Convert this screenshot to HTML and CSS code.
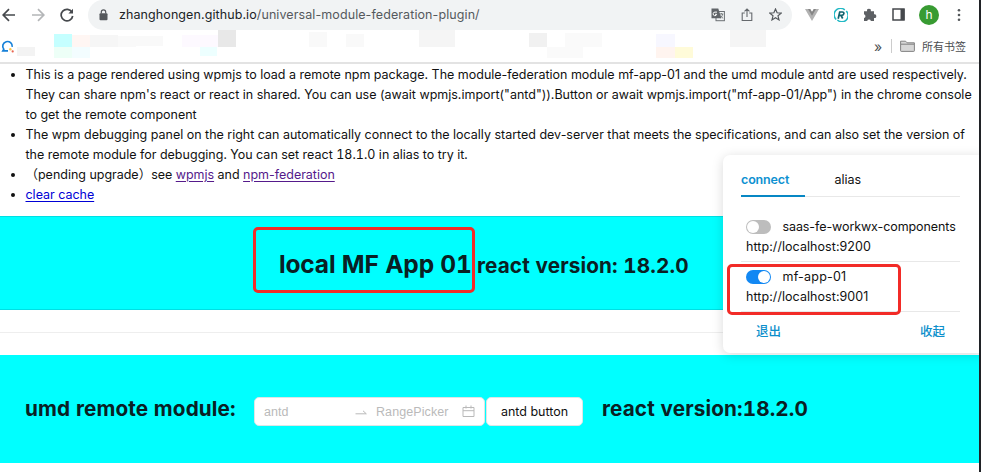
FILE: index.html
```html
<!DOCTYPE html>
<html lang="en">
<head>
<meta charset="utf-8">
<title>universal-module-federation-plugin</title>
<link rel="stylesheet" href="styles.css">
</head>
<body>
<div class="window">
  <header class="toolbar">
    <nav class="nav">
      <svg width="14" height="14" viewBox="0 0 14 14" class="ic dark"><path d="M13 7H1.5M7 1.2 1.2 7 7 12.8"/></svg>
      <svg width="14" height="14" viewBox="0 0 14 14" class="ic light"><path d="M1 7h11.5M7 1.2 12.8 7 7 12.8"/></svg>
      <svg width="14" height="14" viewBox="0 0 14 14" class="ic dark"><path d="M12 4.2A5.8 5.8 0 1 0 12.7 8"/><path d="M13 .8V5.4H8.4z" class="fill"/></svg>
    </nav>
    <div class="address">
      <svg class="lock" width="9" height="12" viewBox="0 0 9 12"><rect x=".5" y="4.2" width="8" height="7" rx="1" fill="#55585c"/><path d="M2.3 4.5V3a2.2 2.2 0 0 1 4.4 0v1.5" fill="none" stroke="#55585c" stroke-width="1.2"/></svg>
      <span class="url"><b>zhanghongen.github.io</b>/universal-module-federation-plugin/</span>
      <svg class="translate" width="14" height="14" viewBox="0 0 14 14"><rect x="5" y="3.5" width="8.4" height="9.2" fill="#f1f3f4" stroke="#6c7074"/><path d="M.5.5h6.8l3 9.8H.5z" fill="#606468"/><path d="M6 4.1H4a1.8 1.8 0 1 0 1.7 2.2H4" fill="none" stroke="#fff"/><path d="M8.3 6h4M10.3 5v1M11.7 6c-.4 2-1.3 3.3-2.6 4M9.3 7.5c.6 1.2 1.6 2.1 2.8 2.7" fill="none" stroke="#606468" stroke-width=".8"/></svg>
      <svg class="share" width="12" height="14" viewBox="0 0 12 14"><path d="M3.8 5H1.2v7.5h9.6V5H8.2M6 9V1M3.5 3.4 6 1l2.5 2.4" fill="none" stroke="#65696d" stroke-width="1.1"/></svg>
      <svg width="13" height="13" viewBox="0 0 13 13"><path d="m6.5 1 1.6 3.8 4.1.3L9 7.8l1 4.1-3.5-2.2L3 11.9l1-4.1L.8 5.1l4.1-.3z" fill="none" stroke="#55595d" stroke-width="1.2"/></svg>
    </div>
    <div class="extensions">
      <svg width="14" height="12" viewBox="0 0 14 12"><path d="M0 0h5.2L7 3 8.8 0H14L7 12z" fill="#b2b2b2"/><path d="M3 0h2.2L7 3 8.8 0H11L7 6.8z" fill="#858585"/></svg>
      <svg width="14" height="14" viewBox="0 0 14 14"><path d="M2.2 11.5A6 6 0 0 1 10.8 2M12.2 3A6 6 0 0 1 3.4 12" fill="none" stroke="#22b9c5" stroke-width="1.5"/><path d="M4.2 10.7 5.7 4h2.7c2.2 0 2 3.4-.8 3.4H5.2M7.1 7.5l1.6 3" fill="none" stroke="#12636e" stroke-width="1.7"/></svg>
      <svg width="14" height="14" viewBox="0 0 14 14"><path d="M1 3.2h3.1a1.9 1.9 0 1 1 3.7 0H11v3.1a1.9 1.9 0 1 1 0 3.7v3H7.9a1.9 1.9 0 0 0-3.7 0H1v-3a1.9 1.9 0 0 0 0-3.7z" fill="#5d6064"/></svg>
      <svg width="13" height="13" viewBox="0 0 13 13"><rect x="1" y="1" width="11" height="11" fill="#fff" stroke="#45484c" stroke-width="1.5"/><path d="M8.5 1h4v11h-4z" fill="#45484c"/></svg>
      <span class="avatar">h</span>
      <svg width="4" height="14" viewBox="0 0 4 14" fill="#55585c"><circle cx="2" cy="2.3" r="1.3"/><circle cx="2" cy="7" r="1.3"/><circle cx="2" cy="11.7" r="1.3"/></svg>
    </div>
  </header>

  <div class="bookmarks">
    <svg class="favicon" width="15" height="15" viewBox="0 0 15 15"><path d="M7.5 12.2H2l1-1.7A5.1 5.1 0 1 1 12 8" fill="none" stroke="#1680d8" stroke-width="1.8"/><circle cx="10" cy="10.5" r="1.3" fill="#fbc54b"/><circle cx="12.5" cy="12.8" r="1.2" fill="#e86450"/></svg>
    <svg class="mosaic" width="753" height="32" viewBox="17 30 753 32" shape-rendering="crispEdges">
      <path d="M17 47h18v9H17z" fill="#f3f3f3"/><path d="M54 34h18v13H54z" fill="#c5ffff"/><path d="M54 47h18v11H54z" fill="#edfff7"/><path d="M72 35h18v12H72z" fill="#fff6f3"/><path d="M72 47h18v11H72z" fill="#f3fdff"/>
      <path d="M90 35h28v12H90z" fill="#f6f6f6"/><path d="M118 36h18v11h-18zM136 36h27v10h-27z" fill="#f9f9f9"/><path d="M182 35h36v12h-36z" fill="#fdf9ff"/><path d="M200 47h17v9h-17z" fill="#edffff"/><path d="M218 29h18v18h-18z" fill="#e8e8e8"/><path d="M309 32h18v15h-18zM346 34h18v13h-18z" fill="#f9f9f9"/>
      <path d="M419 29h36v18h-36z" fill="#f5f5f5"/><path d="M529 33h18v14h-18z" fill="#f1f1f1"/><path d="M547 47h36v11h-36zM565 33h37v14h-37z" fill="#fafafa"/><path d="M656 34h19v13h-19z" fill="#f7f7ff"/><path d="M656 47h19v11h-19z" fill="#fff4ef"/><path d="M675 47h18v11h-18z" fill="#fffbd9"/><path d="M730 29h36v18h-36z" fill="#f5f5f5"/>
    </svg>
    <div class="bookmark-end">
      <span class="more">»</span><i></i>
      <svg width="15" height="12" viewBox="0 0 15 12"><path d="M.6 10.7V1.2h5l1.5 1.6h7.3v7.9a.7.7 0 0 1-.7.7H1.3a.7.7 0 0 1-.7-.7z" fill="#d7d7d7" stroke="#777" stroke-width=".9"/><path d="M1 4.2h13" stroke="#777" stroke-width=".9"/></svg>
      <span>所有书签</span>
    </div>
  </div>

  <main class="page">
    <ul class="notes">
      <li><span class="l1">This is a page rendered using wpmjs to load a remote npm package. The module-federation module mf-app-01 and the umd module antd are used respectively.</span><br><span class="l2">They can share npm's react or react in shared. You can use (await wpmjs.import("antd")).Button or await wpmjs.import("mf-app-01/App") in the chrome console</span><br>to get the remote component</li>
      <li><span class="l3">The wpm debugging panel on the right can automatically connect to the locally started dev-server that meets the specifications, and can also set the version of</span><br><span class="l4">the remote module for debugging. You can set react 18.1.0 in alias to try it.</span></li>
      <li><span class="cjk">（</span>pending upgrade<span class="cjk">）</span>see <a class="visited">wpmjs</a> and <a class="visited">npm-federation</a></li>
      <li><a class="link">clear cache</a></li>
    </ul>
    <section class="band local">
      <h1>local MF App 01</h1><h2>react version: 18.2.0</h2>
      <div class="mark mark-title"></div>
    </section>
    <hr>
    <section class="band umd">
      <h2 class="umd-title">umd remote module:</h2>
      <div class="picker">
        <span class="start">antd</span>
        <svg width="12" height="6" viewBox="0 0 12 6"><path d="M.5 4.8h10.8L8 1.8" fill="none" stroke="#b9b9b9"/></svg>
        <span class="end">RangePicker</span>
        <svg width="13" height="13" viewBox="0 0 13 13"><path d="M1 2.5h11v9H1zM1 5.7h11M4 .5v3M9 .5v3" fill="none" stroke="#b9b9b9"/></svg>
      </div>
      <button>antd button</button>
      <h2 class="umd-version">react version:18.2.0</h2>
    </section>
  </main>

  <aside class="panel">
    <div class="tabs"><span class="tab active">connect</span><span class="tab">alias</span></div>
    <div class="app"><div class="row"><i class="switch"></i><span class="wide">saas-fe-workwx-components</span></div><div class="host">http://localhost:9200</div></div>
    <div class="app"><div class="row"><i class="switch on"></i><span class="app-name">mf-app-01</span></div><div class="host">http://localhost:9001</div></div>
    <div class="actions"><span>退出</span><span>收起</span></div>
    <div class="mark mark-app"></div>
  </aside>
</div>
</body>
</html>
```

FILE: styles.css
```css
* { box-sizing: border-box; }
body { margin: 0; background: #202226; font-family: Inter, "Noto Sans CJK SC", sans-serif; color: #111; }
.window { position: relative; width: 979px; height: 472px; overflow: hidden; background: #fff; }
svg { flex: none; display: block; }

.toolbar { display: flex; height: 30px; align-items: flex-start; }
.nav { display: flex; width: 88px; height: 29px; align-items: center; gap: 15px; padding-left: 2px; }
.ic { fill: none; stroke-width: 1.7; }
.dark { stroke: #46494d; }
.light { stroke: #b4b6b8; }
.fill { fill: #46494d; stroke: none; }
.address { display: flex; align-items: center; width: 704px; height: 30px; padding: 0 10px 1px 11px; border-radius: 15px; background: #f1f3f4; }
.lock { margin-right: 11px; }
.url { flex: 1; font-size: 12.5px; letter-spacing: .09px; white-space: nowrap; color: #55595d; }
.url b { font-weight: 400; color: #202326; }
.translate { margin-right: 16px; }
.share { margin-right: 16px; }
.extensions { display: flex; align-items: center; height: 29px; gap: 15px; padding-left: 13px; }
.avatar { width: 20px; height: 20px; margin-left: -1px; border-radius: 50%; background: #389b32; color: #fff; font-size: 12px; line-height: 20px; text-align: center; }
.avatar + svg { margin-left: 3px; }

.bookmarks { display: flex; align-items: flex-start; height: 34px; border-bottom: 2px solid #e3e3e3; }
.favicon { margin: 9px 2px 0 1px; width: 14px; }
.bookmark-end { display: flex; flex: 1; align-items: center; height: 32px; padding-left: 104px; font-size: 11px; color: #4b4d50; white-space: nowrap; }
.more { width: 17px; font-size: 14px; }
.bookmark-end i { width: 1px; height: 14px; margin-right: 8px; background: #ccc; }
.bookmark-end svg { margin-right: 7px; }

.notes { height: 152px; margin: 0; padding: 1px 0 0 25.5px; font-size: 12.5px; line-height: 20px; white-space: nowrap; }
.notes li { letter-spacing: -.02px; }
.notes li::marker { font-size: 12px; }
.notes .l1 { letter-spacing: -.012px; }
.notes .l2 { letter-spacing: -.006px; }
.notes .l3 { letter-spacing: -.014px; }
.notes .l4 { letter-spacing: .02px; font-variant-numeric: tabular-nums; }
.cjk { font-family: "Noto Sans CJK SC", sans-serif; line-height: 1; }
a { text-decoration: underline; text-underline-offset: 2px; }
.visited { color: #551a8b; }
.link { color: #0000d5; }

.band { position: relative; display: flex; background: #0ff; color: #0a2023; }
.local { height: 94px; border: solid #00dfe3; border-width: 1px 0; align-items: baseline; padding: 30px 0 0 279px; white-space: nowrap; }
h1, h2 { margin: 0; font-weight: 650; font-variant-numeric: tabular-nums; white-space: nowrap; }
h1 { width: 198px; font-size: 24.5px; line-height: 34px; letter-spacing: -.15px; }
h2 { font-size: 20.7px; line-height: 28px; letter-spacing: .13px; }
hr { height: 1px; margin: 22px 0; border: 0; background: #eee; }
.umd { height: 108px; align-items: flex-start; padding: 40px 0 0 25px; }
.umd-title { width: 229px; }
.picker { display: flex; align-items: center; width: 231px; height: 29px; margin-top: 2px; padding: 0 9px; border: 1px solid #dce6e6; border-radius: 5px; background: #fff; color: #bababa; font: 12.5px "Liberation Sans", sans-serif; }
.start { width: 92px; }
.end { width: 87px; margin-left: 9px; letter-spacing: .1px; }
button { width: 97px; height: 29px; margin: 2px 19px 0 1px; padding: 0; border: 1px solid #dce6e6; border-radius: 5px; background: #fff; color: #111; font: 12.5px Inter, sans-serif; }

.panel { position: absolute; left: 723px; top: 155px; width: 262px; height: 198px; padding: 7px 24px 0 18px; border-radius: 7px; background: #fff; box-shadow: 0 2px 12px rgba(0, 0, 0, .15); font-size: 12.5px; }
.tabs { display: flex; width: 219px; height: 35px; margin-bottom: 20px; border-bottom: 1px solid #e8e8e8; }
.tab { height: 35px; line-height: 36px; }
.tab.active { width: 64px; margin-right: 29.5px; border-bottom: 2px solid #0787c4; color: #0d91d1; font-weight: 600; letter-spacing: -.15px; }
.app { width: 219px; height: 45px; padding-left: 5px; border-bottom: 1px solid #e8e8e8; }
.app:nth-child(2) { margin-bottom: 5px; }
.row { display: flex; height: 20px; align-items: center; white-space: nowrap; }
.wide { letter-spacing: -.09px; }
.app-name { letter-spacing: .2px; }
.app, .host { line-height: 20px; }
.host { letter-spacing: .06px; }
.switch { flex: none; width: 25px; height: 14px; margin-right: 11.5px; padding: 1px; border-radius: 7px; background: #bdbdbd; }
.switch::before { content: ""; display: block; width: 12px; height: 12px; border-radius: 50%; background: #fff; }
.switch.on { background: #1288f3; }
.switch.on::before { margin-left: 11px; }
.actions { display: flex; justify-content: space-between; width: 219px; padding: 0 15px; color: #0d8fcb; font-weight: 500; line-height: 40px; }
.mark { position: absolute; border: 3px solid #f22b27; border-radius: 5px; }
.mark-title { left: 253px; top: 10px; width: 222px; height: 66px; }
.mark-app { left: 4px; top: 109px; width: 174px; height: 51px; }
```
